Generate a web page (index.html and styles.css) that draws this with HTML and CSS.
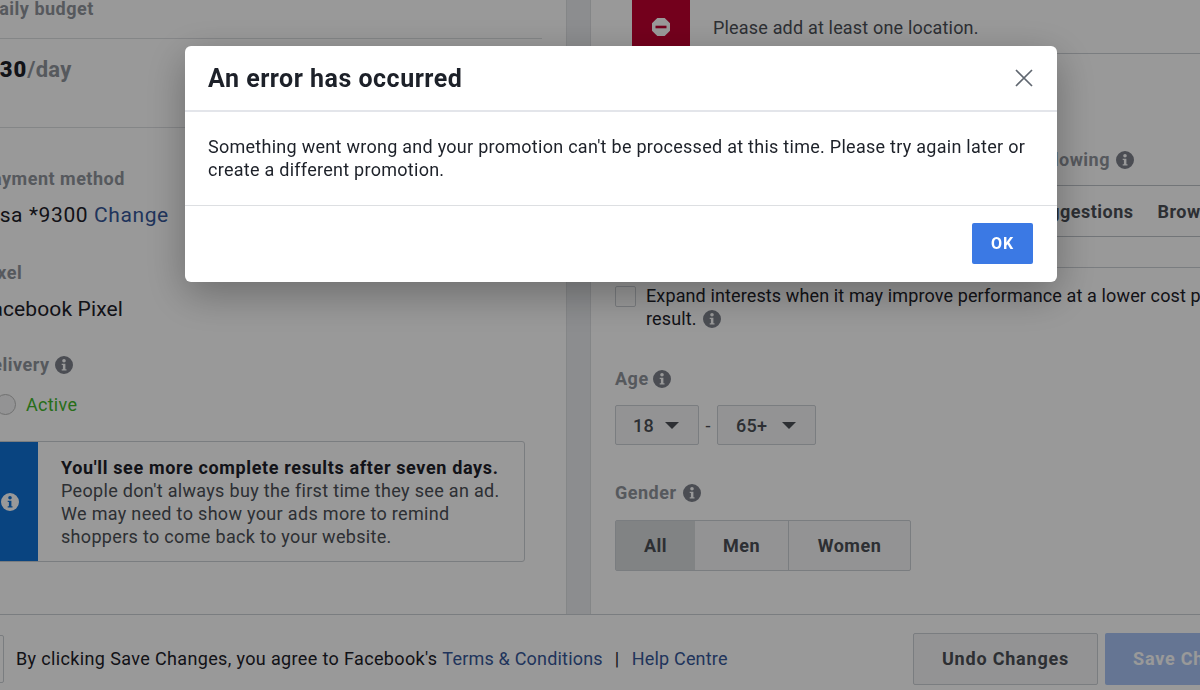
FILE: index.html
```html
<!DOCTYPE html>
<html lang="en">
<head>
    <meta charset="UTF-8">
    <meta name="viewport" content="width=device-width, initial-scale=1.0">
    <title>Edit promotion</title>
    <link rel="stylesheet" href="styles.css">
</head>
<body>

    <svg class="defs" width="0" height="0">
        <symbol id="info" viewBox="0 0 18 18">
            <path fill="currentColor" fill-rule="evenodd" d="M9 0a9 9 0 1 1 0 18A9 9 0 0 1 9 0zM9 3a1.800 1.800 0 1 0 0 3.600A1.800 1.800 0 0 0 9 3zM6.700 7.800v1.200h1.200v4.300H6.700v1.200h4.800v-1.200h-1.100V7.800z"/>
        </symbol>
    </svg>

    <div class="page">
        <div class="columns">
            <!-- Left column -->
            <section class="left">
                <div class="label daily-label">Daily budget</div>
                <div class="budget-line"></div>
                <div class="budget"><b>$30</b><span>/day</span></div>
                <div class="divider"></div>

                <div class="label payment-label">Payment method</div>
                <div class="value value-pay">Visa *9300 <a href="#">Change</a></div>

                <div class="label pixel-label">Pixel</div>
                <div class="value">Facebook Pixel</div>

                <div class="label delivery-label">Delivery <svg class="info"><use href="#info"/></svg></div>
                <div class="status"><span class="toggle"></span><span class="active">Active</span></div>

                <div class="notice">
                    <div class="notice-side"><svg class="info-light"><use href="#info"/></svg></div>
                    <div class="notice-text">
                        <b>You'll see more complete results after seven days.</b><br>
                        People don't always buy the first time they see an ad. We may need to show your ads more to remind shoppers to come back to your website.
                    </div>
                </div>
            </section>

            <div class="gutter"></div>

            <!-- Right column -->
            <section class="right">
                <div class="error-box">
                    <div class="error-side">
                        <svg width="18" height="18" viewBox="0 0 18 18">
                            <path d="M5.300 0h7.400L18 5.300v7.400L12.700 18H5.300L0 12.700V5.300z" fill="#fff"/>
                            <rect x="3.500" y="7.700" width="11" height="2.600" fill="#c00030"/>
                        </svg>
                    </div>
                    <div class="error-text">Please add at least one location.</div>
                </div>

                <div class="label targeting-label">following <svg class="info"><use href="#info"/></svg></div>
                <div class="tabs">
                    <span>Suggestions</span>
                    <i></i>
                    <span>Browse</span>
                </div>
                <div class="targeting-line"></div>

                <div class="expand">
                    <span class="checkbox"></span>
                    <div>Expand interests when it may improve performance at a lower cost per result. <svg class="info"><use href="#info"/></svg></div>
                </div>

                <div class="label age-label">Age <svg class="info"><use href="#info"/></svg></div>
                <div class="age-row">
                    <div class="select select-min">18 <span class="caret"></span></div>
                    <span class="dash">-</span>
                    <div class="select select-max">65+ <span class="caret"></span></div>
                </div>

                <div class="label gender-label">Gender <svg class="info"><use href="#info"/></svg></div>
                <div class="segments">
                    <div class="segment segment-all">All</div>
                    <div class="segment segment-men">Men</div>
                    <div class="segment segment-women">Women</div>
                </div>
            </section>
        </div>

        <!-- Bottom bar -->
        <footer class="footer">
            <span class="back-btn"></span>
            <p class="terms">By clicking Save Changes, you agree to Facebook's <a href="#">Terms &amp; Conditions</a><span class="sep">|</span><a href="#">Help Centre</a></p>
            <button class="undo">Undo Changes</button>
            <button class="save">Save Changes</button>
        </footer>
    </div>

    <!-- Dialog -->
    <div class="overlay">
        <div class="modal">
            <div class="modal-head">
                <h1>An error has occurred</h1>
                <svg class="close" width="18" height="18" viewBox="0 0 18 18">
                    <path d="M1 1l16 16M17 1L1 17" fill="none" stroke="#606770" stroke-width="1.700"/>
                </svg>
            </div>
            <div class="modal-body">Something went wrong and your promotion can't be processed at this time. Please try again later or create a different promotion.</div>
            <div class="modal-foot"><button class="ok">OK</button></div>
        </div>
    </div>

</body>
</html>
```

FILE: styles.css
```css
/* Page base */
html, body {
    height: 100%;
    margin: 0;
    overflow: hidden;
    background-color: #fff;
    color: #1d2129;
    font-family: Roboto, "Liberation Sans", sans-serif;
    font-size: 18px;
    line-height: 23px;
    letter-spacing: 0.27px;
}

a {
    color: #365899;
    text-decoration: none;
}

.defs {
    display: block;
    height: 0;
}

.page {
    display: flex;
    flex-direction: column;
    width: 1200px;
    height: 690px;
    overflow: hidden;
}

.columns {
    display: flex;
    height: 614px;
    overflow: hidden;
}

/* Left column */
.left {
    flex: none;
    width: 566px;
    margin-top: -3px;
}

.left > * {
    margin-left: -20px;
}

.label {
    color: #90949c;
    font-weight: 700;
    letter-spacing: 0.5px;
    display: flex;
    align-items: center;
    gap: 6px;
}

.info {
    width: 18px;
    height: 18px;
    color: #7d818b;
}

.left > .daily-label {
    margin-left: -13px;
}

.budget-line {
    width: 562px;
    height: 1px;
    margin-top: 18px;
    background: #dddfe2;
}

.left > .budget {
    margin-top: 19px;
    margin-left: -14px;
    font-size: 22px;
    line-height: 24px;
    color: #90949c;
    font-weight: 700;
}

.budget b {
    color: #1d2129;
    letter-spacing: 1px;
}

.divider {
    width: 586px;
    height: 1px;
    margin-top: 45px;
    background: #dddfe2;
}

.payment-label {
    margin-top: 39px;
}

.value {
    margin-top: 13px;
    font-size: 21px;
    line-height: 24px;
    letter-spacing: 0.13px;
}

.value-pay {
    letter-spacing: 0.6px;
}

.pixel-label {
    margin-top: 34px;
}

.delivery-label {
    margin-top: 32px;
}

.left > .status {
    display: flex;
    align-items: center;
    gap: 10px;
    margin-top: 17px;
    margin-left: -5px;
}

.toggle {
    width: 21px;
    height: 21px;
    box-sizing: border-box;
    border: 1px solid #bbb;
    border-radius: 50%;
    background: #f5f6f7;
}

.active {
    color: #42b72a;
}

.notice {
    display: flex;
    width: 545px;
    height: 121px;
    margin-top: 25px;
    box-sizing: border-box;
    border: 1px solid #ccd0d5;
    border-radius: 3px;
    overflow: hidden;
}

.notice-side {
    display: flex;
    flex: none;
    width: 57px;
    align-items: center;
    justify-content: center;
    background: #1072d6;
}

.info-light {
    width: 18px;
    height: 18px;
    color: #fff;
}

.notice-text {
    padding: 14px 16px 0 23px;
    color: #4b4f56;
    letter-spacing: 0.32px;
}

.notice-text b {
    color: #1d2129;
    letter-spacing: 0.64px;
}

/* Gutter between the columns */
.gutter {
    flex: none;
    width: 23px;
    border-left: 1px solid #dddfe2;
    border-right: 1px solid #dddfe2;
    background: #e9ebee;
}

/* Right column */
.right {
    flex: 1;
    min-width: 0;
    padding-left: 24px;
}

.error-box {
    display: flex;
    height: 54px;
    margin-left: 17px;
    margin-right: -20px;
    box-sizing: border-box;
    border-bottom: 1px solid #ccd0d5;
}

.error-side {
    display: flex;
    flex: none;
    width: 58px;
    align-items: center;
    justify-content: center;
    background: #c00030;
}

.error-text {
    padding: 16px 0 0 23px;
    color: #4b4f56;
    letter-spacing: 0.18px;
}

.targeting-label {
    margin-top: 94px;
    white-space: nowrap;
    justify-content: flex-end;
    width: 519px;
}

.tabs {
    display: flex;
    align-items: center;
    gap: 12px;
    height: 50px;
    margin-top: 14px;
    padding-left: 411px;
    border: 1px solid #bec3c9;
    border-right: 0;
    color: #4b4f56;
    font-weight: 700;
    letter-spacing: 0.5px;
    white-space: nowrap;
}

.tabs i {
    width: 1px;
    height: 20px;
    background: #ccd0d5;
}

.targeting-line {
    height: 1px;
    margin-top: 30px;
    background: #ccd0d5;
}

.expand {
    display: flex;
    gap: 10px;
    margin-top: 16px;
    white-space: nowrap;
    letter-spacing: 0.12px;
}

.expand div {
    width: 592px;
    flex: none;
    white-space: normal;
}

.expand .info {
    vertical-align: -3px;
    margin-left: 2px;
}

.checkbox {
    flex: none;
    width: 19px;
    height: 19px;
    margin-top: 2px;
    border: 1px solid #ccd0d5;
    border-radius: 2px;
}

.age-label {
    margin-top: 37px;
    gap: 4px;
}

.age-row {
    display: flex;
    align-items: center;
    margin-top: 15px;
}

.select {
    display: flex;
    align-items: center;
    height: 40px;
    box-sizing: border-box;
    padding-left: 17px;
    gap: 11px;
    border: 1px solid #ccd0d5;
    border-radius: 2px;
    background: #f5f6f7;
    color: #4b4f56;
    font-weight: 500;
}

.select-min {
    width: 84px;
}

.select-max {
    width: 99px;
    padding-left: 18px;
    gap: 15px;
}

.caret {
    width: 0;
    height: 0;
    border-left: 7px solid transparent;
    border-right: 7px solid transparent;
    border-top: 7px solid #4b4f56;
}

.dash {
    width: 18px;
    text-align: center;
    color: #4b4f56;
}

.gender-label {
    margin-top: 36px;
}

.segments {
    display: flex;
    width: 296px;
    height: 51px;
    margin-top: 16px;
    box-sizing: border-box;
    border: 1px solid #ccd0d5;
    border-radius: 2px;
    background: #f5f6f7;
    color: #4b4f56;
    font-weight: 700;
    letter-spacing: 0.5px;
}

.segment {
    display: flex;
    align-items: center;
    justify-content: center;
}

.segment-all {
    width: 79px;
    background: #d8dadc;
}

.segment-men {
    width: 93px;
    border-right: 1px solid #ccd0d5;
}

.segment-women {
    flex: 1;
}

/* Bottom bar */
.footer {
    display: flex;
    flex: none;
    align-items: center;
    height: 76px;
    box-sizing: border-box;
    padding-top: 12px;
    border-top: 1px solid #ccd0d5;
    background: #fff;
    white-space: nowrap;
}

.back-btn {
    flex: none;
    width: 24px;
    height: 48px;
    margin-left: -20px;
    box-sizing: border-box;
    border: 1px solid #ccd0d5;
    border-radius: 2px;
}

.terms {
    flex: none;
    width: 897px;
    margin: 0 0 0 12px;
    color: #1d2129;
    letter-spacing: 0.36px;
}

.terms a {
    letter-spacing: 0.2px;
}

.sep {
    margin: 0 12px;
}

.footer button {
    flex: none;
    height: 52px;
    box-sizing: border-box;
    border-radius: 2px;
    font: 700 18px Roboto, "Liberation Sans", sans-serif;
    letter-spacing: 0.8px;
}

.undo {
    width: 185px;
    border: 1px solid #ccd0d5;
    background: #f5f6f7;
    color: #4b4f56;
}

.save {
    width: 185px;
    margin-left: 7px;
    padding-left: 28px;
    text-align: left;
    border: 0;
    background: #a8c4f5;
    color: #fff;
}

/* Dialog over the page */
.overlay {
    position: fixed;
    top: 0;
    left: 0;
    width: 100%;
    height: 100%;
    box-sizing: border-box;
    padding: 46px 0 0 185px;
    background: rgba(0, 0, 0, 0.4);
}

.modal {
    width: 872px;
    height: 236px;
    border-radius: 6px;
    background: #fff;
    box-shadow: 0 12px 40px rgba(0, 0, 0, 0.3);
}

.modal-head {
    display: flex;
    align-items: center;
    justify-content: space-between;
    height: 66px;
    box-sizing: border-box;
    padding: 0 24px 0 23px;
    border-bottom: 2px solid #e3e5ea;
}

.modal-head h1 {
    margin: 0;
    font-size: 25px;
    font-weight: 700;
    letter-spacing: 0.5px;
}

.modal-body {
    height: 94px;
    box-sizing: border-box;
    padding: 23px 23px 0;
    border-bottom: 1px solid #dddfe2;
}

.modal-foot {
    display: flex;
    justify-content: flex-end;
    padding: 17px 24px 0 0;
}

.ok {
    width: 61px;
    height: 41px;
    border: 0;
    border-radius: 2px;
    background: #3b79e4;
    color: #fff;
    font: 700 16px Roboto, "Liberation Sans", sans-serif;
    letter-spacing: 0.9px;
}
```
